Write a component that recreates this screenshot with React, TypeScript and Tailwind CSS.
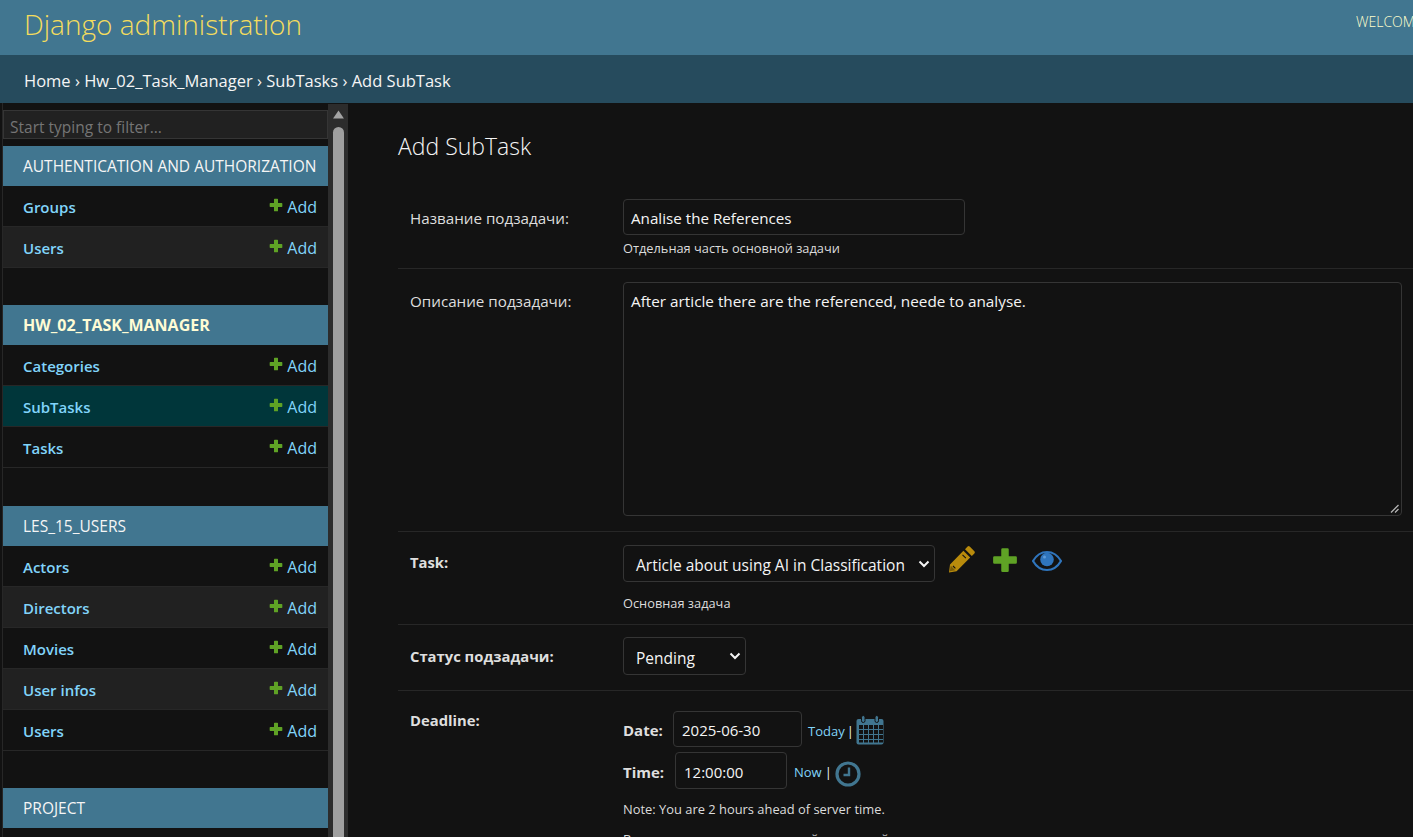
const font = "font-['Open_Sans','Noto_Sans',sans-serif]";

type Section = { title: string; bold?: boolean; rows: { name: string; active?: boolean }[] };

const sections: Section[] = [
  { title: "AUTHENTICATION AND AUTHORIZATION", rows: [{ name: "Groups" }, { name: "Users" }] },
  {
    title: "HW_02_TASK_MANAGER",
    bold: true,
    rows: [{ name: "Categories" }, { name: "SubTasks", active: true }, { name: "Tasks" }],
  },
  {
    title: "LES_15_USERS",
    rows: [{ name: "Actors" }, { name: "Directors" }, { name: "Movies" }, { name: "User infos" }, { name: "Users" }],
  },
];

function Plus({ size, color }: { size: number; color: string }) {
  return (
    <svg width={size} height={size} viewBox="0 0 24 24">
      <path d="M10 2.500h4a1 1 0 0 1 1 1V9h5.500a1 1 0 0 1 1 1v4a1 1 0 0 1-1 1H15v5.500a1 1 0 0 1-1 1h-4a1 1 0 0 1-1-1V15H3.500a1 1 0 0 1-1-1v-4a1 1 0 0 1 1-1H9V3.500a1 1 0 0 1 1-1z" fill={color} />
    </svg>
  );
}

function Row({ name, active, odd }: { name: string; active?: boolean; odd: boolean }) {
  return (
    <div className={`flex h-[41px] items-center justify-between border-b border-[#272727] pl-[20px] pr-[11px] pt-[2px] ${active ? "bg-[#00363a]" : odd ? "bg-[#212121]" : "bg-[#121212]"}`}>
      <span className="text-[15px] font-semibold text-[#81d4fa]">{name}</span>
      <span className="flex items-center text-[16px] text-[#81d4fa]">
        <span className="mb-[5px] mr-[3px]">
          <Plus size={16} color="#5fa225" />
        </span>
        Add
      </span>
    </div>
  );
}

function Sidebar() {
  return (
    <aside className="flex h-full w-[348px] shrink-0 overflow-hidden bg-[#121212] pl-[2px]">
      <div className="w-[326px] shrink-0 border-l border-[#272727]">
        <div className="mb-[7px] mt-[7px] flex h-[29px] items-center border border-[#353535] bg-[#212121] pl-[6px] pt-[6px] text-[15.500px] text-[#757575]">
          Start typing to filter...
        </div>
        {sections.map((s, i) => (
          <div key={s.title} className={i === 1 ? "mb-[38px]" : "mb-[37px]"}>
            <div className={`flex h-[40px] items-center whitespace-nowrap bg-[#417690] pl-[20px] ${s.bold ? "text-[16px] font-bold text-[#fffcd5]" : "pt-[2px] text-[15.500px] text-[#f5f5f5]"}`}>
              {s.title}
            </div>
            {s.rows.map((r, j) => (
              <Row key={r.name} name={r.name} active={r.active} odd={j % 2 === 1} />
            ))}
          </div>
        ))}
        <div className="flex h-[40px] items-center bg-[#417690] pl-[20px] pt-[2px] text-[15.500px] text-[#f5f5f5]">PROJECT</div>
      </div>
      <div className="mt-[1px] flex w-[20px] shrink-0 flex-col items-center bg-[#2c2c2c]">
        <svg width="13" height="9" viewBox="0 0 12 9" className="mt-[6px]">
          <path d="M6 0.500 11.500 8.500H0.500z" fill="#a3a3a3" />
        </svg>
        <div className="mt-[8px] h-[720px] w-[11px] rounded-t-[6px] bg-[#9f9f9f]" />
      </div>
    </aside>
  );
}

function FieldLabel({ children, bold, className }: { children: string; bold?: boolean; className?: string }) {
  return (
    <div className={`w-[213px] shrink-0 leading-[20px] text-[#dedede] ${bold ? "text-[14.800px] font-bold" : "text-[15.200px]"} ${className ?? ""}`}>
      {children}
    </div>
  );
}

function Help({ children }: { children: string }) {
  return <div className="text-[12.800px] leading-[16px] text-[#dcdcdc]">{children}</div>;
}

function Pencil() {
  return (
    <svg width="28" height="28" viewBox="0 0 28 28">
      <path d="M19.600 1.600a1.500 1.500 0 0 1 2.100 0l4.700 4.700a1.500 1.500 0 0 1 0 2.100l-2.600 2.600-6.800-6.800zM15.400 5.800l6.800 6.800L8.600 26.200 1 27.400l1-7.800z" fill="#b98b0c" />
      <path d="M5 21l2.400 2.400M14.500 9.800l3.400 3.400" stroke="#121212" strokeWidth="1.100" />
      <path d="M2.800 20.800l4.400 4.400-5.400 1z" fill="#7a5c08" />
    </svg>
  );
}

function Eye() {
  return (
    <svg width="30" height="22" viewBox="0 0 30 22">
      <path d="M1 11C4.500 5 9.300 2 15 2s10.500 3 14 9c-3.500 6-8.300 9-14 9S4.500 17 1 11z" fill="none" stroke="#2f75bd" strokeWidth="2.200" />
      <circle cx="15" cy="9.500" r="6.800" fill="#2f75bd" />
      <circle cx="12.500" cy="7" r="1.500" fill="#5e9bd8" />
    </svg>
  );
}

function CalendarIcon() {
  return (
    <svg width="28" height="30" viewBox="0 0 28 30">
      <rect x="0.500" y="4" width="27" height="25.500" rx="2" fill="#417690" />
      <rect x="5.500" y="0.500" width="3.500" height="7" rx="1.700" fill="#417690" stroke="#121212" strokeWidth="1" />
      <rect x="19" y="0.500" width="3.500" height="7" rx="1.700" fill="#417690" stroke="#121212" strokeWidth="1" />
      <g fill="#121212">
        {[10, 15, 20, 25].map((y) =>
          [3, 8, 13, 18, 23].map((x) => <rect key={`${x}-${y}`} x={x} y={y} width="4" height={y === 25 ? 2.500 : 4} />),
        )}
      </g>
    </svg>
  );
}

function ClockIcon() {
  return (
    <svg width="26" height="26" viewBox="0 0 26 26">
      <circle cx="13" cy="13" r="11" fill="none" stroke="#417690" strokeWidth="3.200" />
      <path d="M14 6.500V14H8.500" fill="none" stroke="#417690" strokeWidth="2.400" />
    </svg>
  );
}

function Chevron() {
  return (
    <svg width="12" height="8" viewBox="0 0 12 8" className="shrink-0">
      <path d="M1.500 1.500 6 6l4.500-4.500" fill="none" stroke="#f5f5f5" strokeWidth="2" />
    </svg>
  );
}

function SelectBox({ size, textPad, children }: { size: string; textPad: string; children: string }) {
  return (
    <div className={`flex items-center justify-between rounded-[4px] border border-[#353535] pl-[12px] pr-[4px] text-[15.500px] text-[#f5f5f5] ${size}`}>
      <span className={`whitespace-nowrap ${textPad}`}>{children}</span>
      <Chevron />
    </div>
  );
}

function MainForm() {
  return (
    <main className="min-w-0 flex-1 overflow-hidden bg-[#121212] pl-[50px] pt-[26px]">
      <h1 className="mb-[26px] text-[23px] font-light leading-[34px] text-[#f5f5f5]">Add SubTask</h1>

      <div className="flex h-[80px] border-b border-[#272727] pl-[12px] pt-[10px]">
        <FieldLabel className="pt-[9px]">Название подзадачи:</FieldLabel>
        <div>
          <div className="flex h-[36px] w-[342px] items-center rounded-[4px] border border-[#353535] pl-[7px] pt-[2px] text-[15.200px] text-[#f5f5f5]">
            Analise the References
          </div>
          <div className="mt-[5px]">
            <Help>Отдельная часть основной задачи</Help>
          </div>
        </div>
      </div>

      <div className="flex h-[263px] border-b border-[#272727] pl-[12px] pt-[13px]">
        <FieldLabel className="pt-[9px]">Описание подзадачи:</FieldLabel>
        <div className="relative h-[234px] w-[779px] rounded-[4px] border border-[#353535] px-[7px] py-[8px] text-[15.300px] leading-[20px] text-[#f5f5f5]">
          After article there are the referenced, neede to analyse.
          <svg width="9" height="9" viewBox="0 0 9 9" className="absolute bottom-[2px] right-[2px]">
            <path d="M8.500 1 1 8.500M8.500 5 5 8.500" stroke="#b5b5b5" strokeWidth="1.300" />
          </svg>
        </div>
      </div>

      <div className="flex h-[93px] border-b border-[#272727] pl-[12px] pt-[13px]">
        <FieldLabel bold className="pt-[7px]">Task:</FieldLabel>
        <div>
          <div className="flex items-start">
            <SelectBox size="h-[37px] w-[312px]" textPad="pt-[4px]">Article about using AI in Classification</SelectBox>
            <span className="ml-[13px] flex"><Pencil /></span>
            <span className="ml-[14px] flex"><Plus size={30} color="#5fa225" /></span>
            <span className="ml-[12px] mt-[5px] flex"><Eye /></span>
          </div>
          <div className="mt-[13px]">
            <Help>Основная задача</Help>
          </div>
        </div>
      </div>

      <div className="flex h-[66px] border-b border-[#272727] pl-[12px] pt-[12px]">
        <FieldLabel bold className="pt-[9px]">Статус подзадачи:</FieldLabel>
        <SelectBox size="h-[38px] w-[123px]" textPad="pt-[6px]">Pending</SelectBox>
      </div>

      <div className="flex pl-[12px] pt-[20px]">
        <FieldLabel bold className="-mt-px">Deadline:</FieldLabel>
        <div className="text-[15px] text-[#f5f5f5]">
          <div className="flex h-[36px] items-center">
            <span className="w-[50px] pt-[2px] font-bold text-[#dedede]">Date:</span>
            <div className="flex h-[36px] w-[129px] items-center rounded-[4px] border border-[#353535] pl-[8px] pt-[2px] text-[15px]">2025-06-30</div>
            <span className="ml-[6px] pt-[6px] text-[13px] text-[#81d4fa]">Today</span>
            <span className="ml-[2px] pt-[6px] text-[13px]">|</span>
            <span className="ml-[2px] mt-[2px] flex"><CalendarIcon /></span>
          </div>
          <div className="mt-[5px] flex h-[37px] items-center">
            <span className="w-[52px] pt-[4px] font-bold text-[#dedede]">Time:</span>
            <div className="flex h-[37px] w-[112px] items-center rounded-[4px] border border-[#353535] pl-[8px] pt-[4px] text-[15px]">12:00:00</div>
            <span className="ml-[7px] pt-[4px] text-[13px] text-[#81d4fa]">Now</span>
            <span className="ml-[3px] pt-[4px] text-[13px]">|</span>
            <span className="ml-[3px] mt-[6px] flex"><ClockIcon /></span>
          </div>
          <div className="mt-[11px] text-[12.900px] leading-[18px] text-[#dcdcdc]">Note: You are 2 hours ahead of server time.</div>
          <div className="mt-[13px] whitespace-nowrap text-[12.800px] leading-[16px] text-[#dcdcdc]">Время для завершения данной отдельной части</div>
        </div>
      </div>
    </main>
  );
}

export default function App() {
  return (
    <div className={`flex h-[837px] flex-col overflow-hidden bg-[#121212] ${font}`}>
      <header className="flex h-[55px] shrink-0 items-center justify-between overflow-hidden bg-[#417690] pl-[24px]">
        <span className="pb-[8px] text-[28px] font-light text-[#f5dd5d]">Django administration</span>
        <span className="w-[57px] self-start overflow-hidden whitespace-nowrap pt-[11px] text-[14px] font-light text-[#ffffcc]">WELCOME, ADMIN</span>
      </header>
      <nav className="flex h-[48px] shrink-0 items-center bg-[#264b5d] pl-[24px] pt-[4px] text-[16.500px] text-[#f5f5f5]">
        Home › Hw_02_Task_Manager › SubTasks › Add SubTask
      </nav>
      <div className="flex min-h-0 flex-1">
        <Sidebar />
        <MainForm />
      </div>
    </div>
  );
}
